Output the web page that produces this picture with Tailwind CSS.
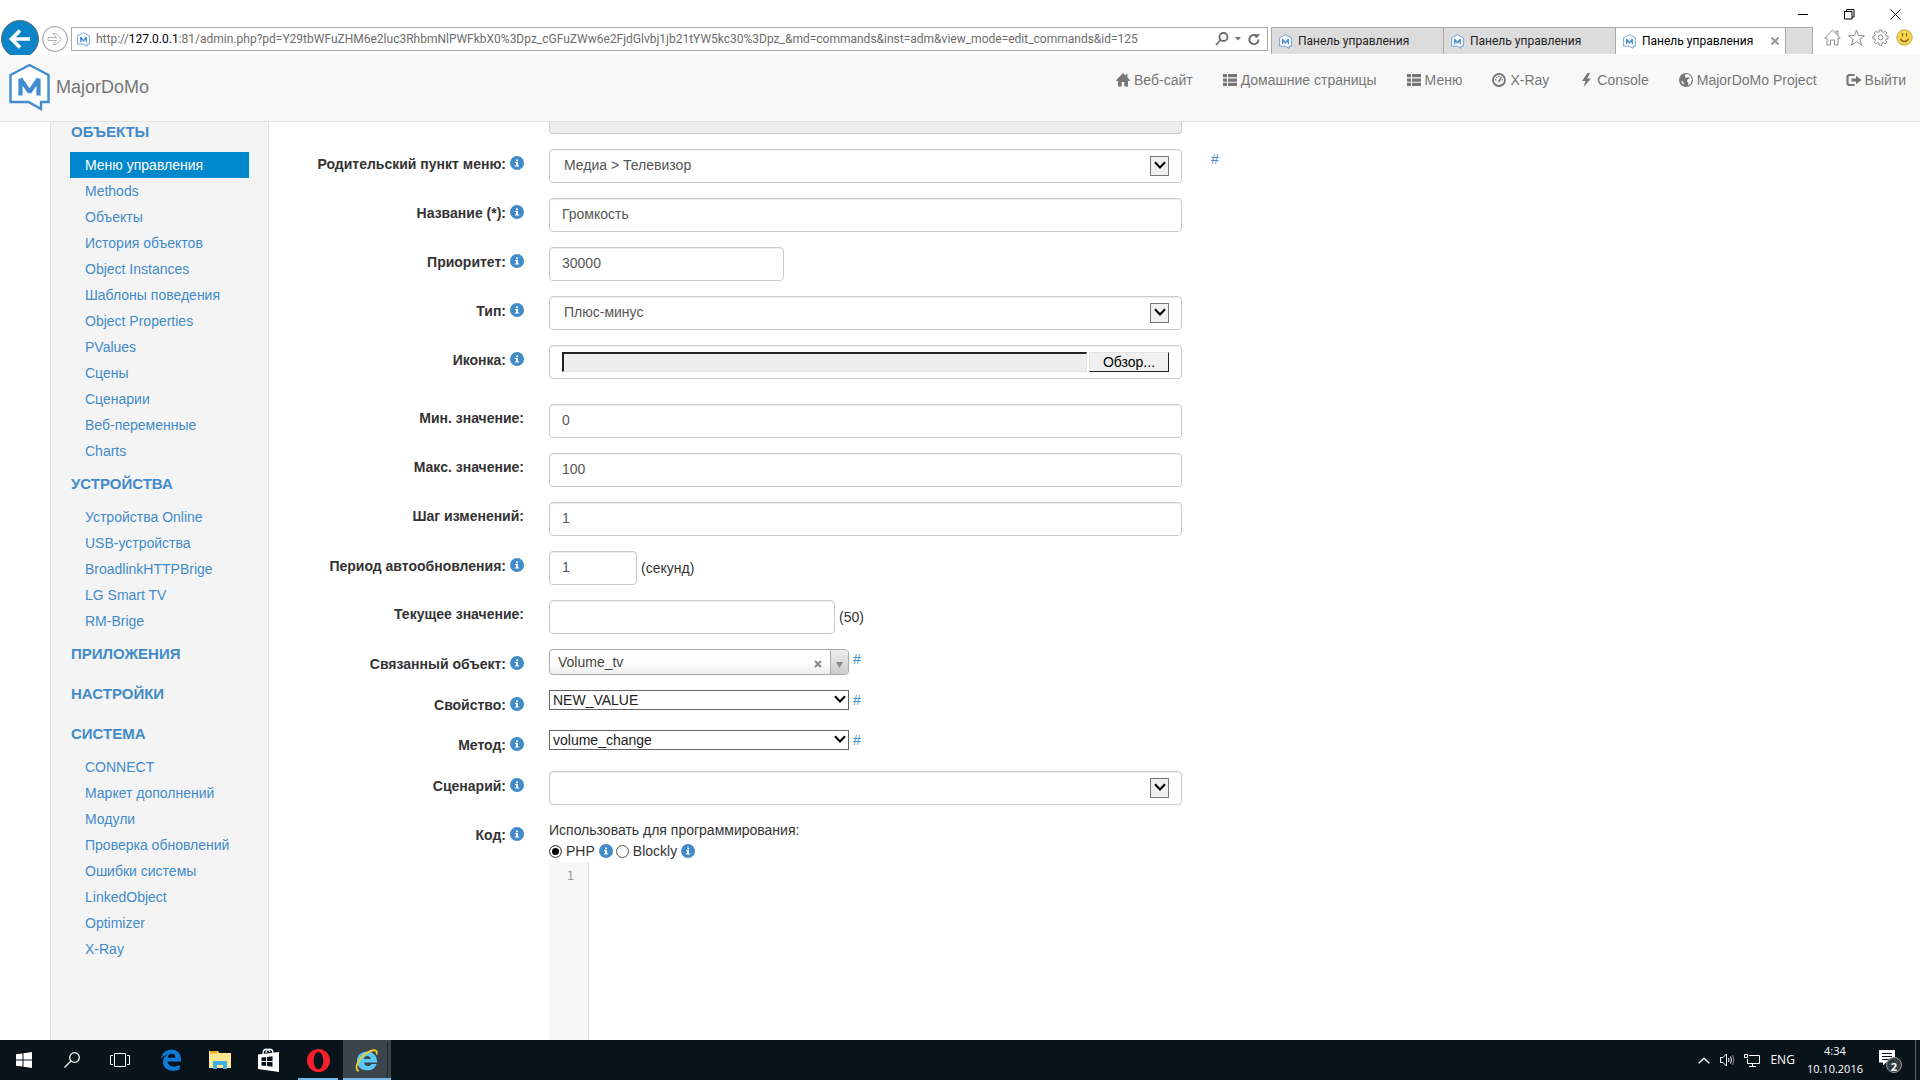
<!DOCTYPE html>
<html lang="ru">
<head>
<meta charset="utf-8">
<title>Панель управления</title>
<script src="https://cdn.jsdelivr.net/npm/@tailwindcss/browser@4"></script>
</head>
<body class="flex h-screen flex-col overflow-hidden bg-white font-['Liberation_Sans',Arial,sans-serif] text-sm leading-5 text-[#333]">

<svg class="hidden" aria-hidden="true">
  <symbol id="logo" viewBox="0 0 42 48"><path d="M2 12 21 2l19 10v27h-7.500v7L20 39H2z" fill="#fff" stroke="#428bd3" stroke-width="2.400"/><path d="M12 32.500V16l9 13 9-13v16.500" fill="none" stroke="#428bd3" stroke-width="4.200" stroke-linejoin="bevel"/></symbol>
  <symbol id="info" viewBox="0 0 14 14"><circle cx="7" cy="7" r="7" fill="#428bca"/><path d="M6 3.500h2v1.700H6zM5 6h3v3.500h1.200v1H4.800v-1H6V7H5z" fill="#fff"/></symbol>
  <symbol id="chev" viewBox="0 0 12 8"><path d="M1 1.200 6 6.500l5-5.300" fill="none" stroke="currentColor" stroke-width="2"/></symbol>
  <symbol id="list" viewBox="0 0 14 14"><path d="M0 1h4v3.300H0zM5 1h9v3.300H5zM0 5.400h4v3.300H0zM5 5.400h9v3.300H5zM0 9.800h4v3.300H0zM5 9.800h9v3.300H5z"/></symbol>
</svg>

<!-- Browser window bar -->
<header class="flex h-[55px] shrink-0 items-start overflow-hidden bg-white font-[Roboto,'Open_Sans',sans-serif]">
  <div class="flex min-w-0 flex-1 items-start pt-5">
    <button class="ml-px size-[38px] shrink-0" aria-label="Назад"><svg viewBox="0 0 38 38"><circle cx="19" cy="19" r="18.500" fill="#0a84c6" stroke="#5d6b75"/><path d="M29 19H11M19 10.500 10.500 19l8.500 8.500" fill="none" stroke="#fff" stroke-width="3.600"/></svg></button>
    <button class="mt-[6px] ml-[3px] size-[26px] shrink-0" aria-label="Вперёд"><svg viewBox="0 0 26 26" fill="none" stroke="#b0b0b0"><circle cx="13" cy="13" r="12.300" stroke-width="1.300"/><path d="M6 11.500h8.500l-3.500-4h3l5.500 5.500-5.500 5.500h-3l3.500-4H6z"/></svg></button>
    <div class="mt-[7px] ml-[3px] flex h-6 min-w-0 flex-1 items-center border border-[#a9a9a9] pr-[6px] pl-[5px]">
      <svg class="h-[15px] w-[13px] shrink-0"><use href="#logo"/></svg>
      <p class="ml-[6px] min-w-0 flex-1 truncate text-xs leading-5 text-[#6d6d6d]">http://<span class="text-black">127.0.0.1</span>:81/admin.php?pd=Y29tbWFuZHM6e2luc3RhbmNlPWFkbX0%3Dpz_cGFuZWw6e2FjdGlvbj1jb21tYW5kc30%3Dpz_&amp;md=commands&amp;inst=adm&amp;view_mode=edit_commands&amp;id=125</p>
      <button class="size-[14px] shrink-0" aria-label="Поиск"><svg viewBox="0 0 14 14" fill="none" stroke="#6d6d6d" stroke-width="1.800"><circle cx="8.500" cy="5" r="4"/><path d="M5.500 8 1 13"/></svg></button>
      <button class="mx-[6px] w-[6px] shrink-0" aria-label="Список адресов"><svg viewBox="0 0 6 4"><path d="M0 0h6L3 3.500z" fill="#6d6d6d"/></svg></button>
      <button class="size-[14px] shrink-0" aria-label="Обновить"><svg viewBox="0 0 14 14"><path d="M11.500 7.500A4.600 4.600 0 1 1 8.500 3.200" fill="none" stroke="#6d6d6d" stroke-width="1.900"/><path d="M7 0v5.500h5.500z" fill="#6d6d6d" transform="rotate(-45 9 3)"/></svg></button>
    </div>
  </div>
  <nav class="mt-[27px] ml-[3px] flex h-[27px] shrink-0 border-t border-r border-[#a9a9a9] text-xs text-[#222]">
    <a href="#" class="flex w-[172px] items-center gap-[6px] border-l border-[#a9a9a9] bg-[#dcdcdc] pl-[7px]"><svg class="h-[15px] w-[13px]"><use href="#logo"/></svg>Панель управления</a>
    <a href="#" class="flex w-[172px] items-center gap-[6px] border-l border-[#a9a9a9] bg-[#dcdcdc] pl-[7px]"><svg class="h-[15px] w-[13px]"><use href="#logo"/></svg>Панель управления</a>
    <a href="#" class="flex w-[170px] items-center gap-[6px] border-l border-[#a9a9a9] bg-white pr-[6px] pl-[7px] text-black"><svg class="h-[15px] w-[13px]"><use href="#logo"/></svg>Панель управления<svg class="ml-auto size-2" viewBox="0 0 8 8"><path d="m.5.5 7 7m0-7-7 7" stroke="#999" stroke-width="2"/></svg></a>
    <button class="w-[27px] border-l border-[#a9a9a9] bg-[#dcdcdc]" aria-label="Новая вкладка"></button>
  </nav>
  <div class="flex shrink-0 flex-col items-end pr-[7px] pl-[11px]">
    <div class="-ml-10 flex h-[29px] items-center gap-[35px] pr-[12px]">
      <button aria-label="Свернуть"><svg class="size-[11px]" viewBox="0 0 11 11"><path d="M0 5.500h10" stroke="#000"/></svg></button>
      <button aria-label="Восстановить"><svg class="size-[11px]" viewBox="0 0 11 11" fill="none" stroke="#000"><path d="M.5 2.500h7.500v7.500H.5zM2.500 2.500v-2H10v7.500H8"/></svg></button>
      <button aria-label="Закрыть"><svg class="size-[11px]" viewBox="0 0 11 11"><path d="m.5.5 10 10m0-10-10 10" stroke="#000"/></svg></button>
    </div>
    <div class="flex items-center gap-[7px]">
      <button aria-label="Домой"><svg class="size-[17px]" viewBox="0 0 17 17" fill="none" stroke="#8d8d8d"><path d="M.7 9 8.500 1 16.300 9l-1 1-1.300-1.300V16h-3.500v-5h-4v5H3V8.700L1.700 10zM12 4.500V2h2v4.500"/></svg></button>
      <button aria-label="Избранное"><svg class="size-[17px]" viewBox="0 0 17 17" fill="none" stroke="#8d8d8d"><path d="m8.500 1 2 5.500 6 .2-4.700 3.700 1.700 5.800-5-3.400-5 3.400 1.700-5.800L.5 6.700l6-.2z"/></svg></button>
      <button aria-label="Сервис"><svg class="size-[17px]" viewBox="0 0 17 17" fill="none" stroke="#8d8d8d"><circle cx="8.500" cy="8.500" r="2.400"/><path d="M7.200 1h2.600l.3 2 1.300.5 1.700-1.200 1.700 1.700-1.200 1.700.5 1.300 2 .3v2.600l-2 .3-.5 1.300 1.200 1.700-1.700 1.700-1.700-1.200-1.300.5-.3 2H7.200l-.3-2-1.300-.5-1.700 1.200-1.700-1.700 1.200-1.700-.5-1.300-2-.3V7.300l2-.3.500-1.300L2.200 4l1.700-1.700 1.700 1.200L6.900 3z"/></svg></button>
      <button aria-label="Отзыв"><svg class="size-[17px]" viewBox="0 0 17 17"><circle cx="8.500" cy="8.500" r="7.700" fill="#fcd647" stroke="#b9a55a"/><path d="M6.500 4v3.500M10.500 4v3.500M4.500 9.500c1 4 7 4 8 0" fill="none" stroke="#7b6a26" stroke-width="1.300"/></svg></button>
    </div>
  </div>
</header>

<!-- Site navigation -->
<div class="flex h-[67px] shrink-0 items-start justify-between border-b border-[#e3e3e3] bg-[#f8f8f8] pr-[14px] pl-2 text-[#777]">
  <a href="#" class="flex items-center gap-[5px] pt-2 text-lg leading-5"><svg class="h-12 w-[43px]"><use href="#logo"/></svg>MajorDoMo</a>
  <nav class="flex gap-[30px] pt-[15px]">
    <a href="#" class="flex items-center gap-1"><svg class="size-[14px]" viewBox="0 0 14 14" fill="currentColor"><path d="M7 0 0 7.200l.8.800H2v5.500h3.800V9h2.400v4.500H12V8h1.200l.8-.8-2.500-2.600V1H9.700v1.700z"/></svg>Веб-сайт</a>
    <a href="#" class="flex items-center gap-1"><svg class="size-[14px]" fill="currentColor"><use href="#list"/></svg>Домашние страницы</a>
    <a href="#" class="flex items-center gap-1"><svg class="size-[14px]" fill="currentColor"><use href="#list"/></svg>Меню</a>
    <a href="#" class="flex items-center gap-1"><svg class="size-[14px]" viewBox="0 0 14 14"><circle cx="7" cy="7" r="6" fill="none" stroke="currentColor" stroke-width="1.800"/><path d="M6.200 8 9 3.500 10 4 8 8.500 6.500 9.500zM3 6h1.500v1.200H3zM4 3.800h1.300V5H4zM6.300 2.800h1.200V4H6.300zM9.700 6H11v1.200H9.700z" fill="currentColor"/></svg>X-Ray</a>
    <a href="#" class="flex items-center gap-1"><svg class="size-[14px]" viewBox="0 0 14 14" fill="currentColor"><path d="M8.500 0 3 8h3.500L4.500 14 12 5.500H8.300L11 0z"/></svg>Console</a>
    <a href="#" class="flex items-center gap-1"><svg class="size-[14px]" viewBox="0 0 14 14"><circle cx="7" cy="7" r="7" fill="currentColor"/><path d="M6 1.500 9 1l3 2.500 1 3.500-1.500 4L9 12.500 9.500 10 8 8.500l.5-2L11 5 9 4 7.500 5 6 4zM2 7.500 4.500 9l.5 2.500-1.500-.5z" fill="#f8f8f8"/></svg>MajorDoMo Project</a>
    <a href="#" class="flex items-center gap-1"><svg class="size-[14px] overflow-visible" viewBox="1 0 14 14"><path d="M8.500 2H3.500Q1.500 2 1.500 4v6q0 2 2 2h5" fill="none" stroke="currentColor" stroke-width="2.200"/><path d="M5.500 5.500H10V2.800L15.500 7 10 11.200V8.500H5.500z" fill="currentColor"/></svg>Выйти</a>
  </nav>
</div>

<main class="flex min-h-0 flex-1 overflow-hidden pl-[50px]">
  <!-- Section menu -->
  <aside class="w-[219px] shrink-0 border-x border-[#e0e0e0] bg-[#f4f4f4] px-[19px] leading-[26px] text-[#428bca]">
    <h2 class="flex h-[30px] items-center pb-[10px] pl-px text-[15px] font-bold"><a href="#">ОБЪЕКТЫ</a></h2>
    <ul>
      <li><a href="#" class="block bg-[#0088cc] pl-[15px] text-white">Меню управления</a></li>
      <li><a href="#" class="block pl-[15px]">Methods</a></li>
      <li><a href="#" class="block pl-[15px]">Объекты</a></li>
      <li><a href="#" class="block pl-[15px]">История объектов</a></li>
      <li><a href="#" class="block pl-[15px]">Object Instances</a></li>
      <li><a href="#" class="block pl-[15px]">Шаблоны поведения</a></li>
      <li><a href="#" class="block pl-[15px]">Object Properties</a></li>
      <li><a href="#" class="block pl-[15px]">PValues</a></li>
      <li><a href="#" class="block pl-[15px]">Сцены</a></li>
      <li><a href="#" class="block pl-[15px]">Сценарии</a></li>
      <li><a href="#" class="block pl-[15px]">Веб-переменные</a></li>
      <li><a href="#" class="block pl-[15px]">Charts</a></li>
    </ul>
    <h2 class="flex h-10 items-center pl-px text-[15px] font-bold"><a href="#">УСТРОЙСТВА</a></h2>
    <ul>
      <li><a href="#" class="block pl-[15px]">Устройства Online</a></li>
      <li><a href="#" class="block pl-[15px]">USB-устройства</a></li>
      <li><a href="#" class="block pl-[15px]">BroadlinkHTTPBrige</a></li>
      <li><a href="#" class="block pl-[15px]">LG Smart TV</a></li>
      <li><a href="#" class="block pl-[15px]">RM-Brige</a></li>
    </ul>
    <h2 class="flex h-10 items-center pl-px text-[15px] font-bold"><a href="#">ПРИЛОЖЕНИЯ</a></h2>
    <h2 class="flex h-10 items-center pl-px text-[15px] font-bold"><a href="#">НАСТРОЙКИ</a></h2>
    <h2 class="flex h-10 items-center pl-px text-[15px] font-bold"><a href="#">СИСТЕМА</a></h2>
    <ul>
      <li><a href="#" class="block pl-[15px]">CONNECT</a></li>
      <li><a href="#" class="block pl-[15px]">Маркет дополнений</a></li>
      <li><a href="#" class="block pl-[15px]">Модули</a></li>
      <li><a href="#" class="block pl-[15px]">Проверка обновлений</a></li>
      <li><a href="#" class="block pl-[15px]">Ошибки системы</a></li>
      <li><a href="#" class="block pl-[15px]">LinkedObject</a></li>
      <li><a href="#" class="block pl-[15px]">Optimizer</a></li>
      <li><a href="#" class="block pl-[15px]">X-Ray</a></li>
    </ul>
  </aside>

  <!-- Menu item form -->
  <form class="grid min-w-0 flex-1 grid-cols-[255px_minmax(0,633fr)_minmax(0,713fr)] content-start gap-x-[25px] gap-y-[15px]">
    <div class="col-start-2 h-3 rounded-b border border-t-0 border-[#ccc] bg-[#eee]"></div>

    <label for="parent" class="col-start-1 flex items-start justify-end gap-1 pt-[5px] font-bold">Родительский пункт меню:<svg class="mt-[2px] size-[14px]"><use href="#info"/></svg></label>
    <div class="relative h-[34px]">
      <select id="parent" class="size-full appearance-none rounded border border-[#ccc] bg-white pr-10 pb-[2px] pl-[14px] text-[#555] shadow-[inset_0_1px_1px_rgba(0,0,0,0.075)]"><option>Медиа &gt; Телевизор</option></select>
      <span class="pointer-events-none absolute top-[7px] right-[13px] flex h-5 w-[19px] items-center justify-center border border-[#777] bg-[#f0f0f0] pb-[2px] text-black"><svg class="h-2 w-3"><use href="#chev"/></svg></span>
    </div>
    <a href="#" class="justify-self-start pl-1 text-[#428bca]">#</a>

    <label for="title" class="col-start-1 flex items-start justify-end gap-1 pt-[5px] font-bold">Название (*):<svg class="mt-[2px] size-[14px]"><use href="#info"/></svg></label>
    <input id="title" value="Громкость" class="h-[34px] rounded border border-[#ccc] px-3 pb-[2px] text-[#555] shadow-[inset_0_1px_1px_rgba(0,0,0,0.075)]">

    <label for="priority" class="col-start-1 flex items-start justify-end gap-1 pt-[5px] font-bold">Приоритет:<svg class="mt-[2px] size-[14px]"><use href="#info"/></svg></label>
    <input id="priority" value="30000" class="h-[34px] w-[235px] rounded border border-[#ccc] px-3 pb-[2px] text-[#555] shadow-[inset_0_1px_1px_rgba(0,0,0,0.075)]">

    <label for="type" class="col-start-1 flex items-start justify-end gap-1 pt-[5px] font-bold">Тип:<svg class="mt-[2px] size-[14px]"><use href="#info"/></svg></label>
    <div class="relative h-[34px]">
      <select id="type" class="size-full appearance-none rounded border border-[#ccc] bg-white pr-10 pb-[2px] pl-[14px] text-[#555] shadow-[inset_0_1px_1px_rgba(0,0,0,0.075)]"><option>Плюс-минус</option></select>
      <span class="pointer-events-none absolute top-[7px] right-[13px] flex h-5 w-[19px] items-center justify-center border border-[#777] bg-[#f0f0f0] pb-[2px] text-black"><svg class="h-2 w-3"><use href="#chev"/></svg></span>
    </div>

    <label for="icon" class="col-start-1 flex items-start justify-end gap-1 pt-[5px] font-bold">Иконка:<svg class="mt-[2px] size-[14px]"><use href="#info"/></svg></label>
    <div class="mb-[10px] flex h-[34px] items-center gap-[2px] rounded border border-[#ccc] px-3 shadow-[inset_0_1px_1px_rgba(0,0,0,0.075)]">
      <input id="icon" readonly class="h-5 min-w-0 flex-1 border-t-2 border-r border-b border-l-2 border-t-[#222] border-r-[#e3e3e3] border-b-[#e3e3e3] border-l-[#222] bg-[#eee]">
      <button type="button" class="h-5 w-20 border border-t-[#e3e3e3] border-r-[#222] border-b-[#222] border-l-[#e3e3e3] bg-[#f0f0f0] leading-[18px] text-black">Обзор...</button>
    </div>

    <label for="min" class="col-start-1 flex items-start justify-end pt-1 font-bold">Мин. значение:</label>
    <input id="min" value="0" class="h-[34px] rounded border border-[#ccc] px-3 pb-[2px] text-[#555] shadow-[inset_0_1px_1px_rgba(0,0,0,0.075)]">

    <label for="max" class="col-start-1 flex items-start justify-end pt-1 font-bold">Макс. значение:</label>
    <input id="max" value="100" class="h-[34px] rounded border border-[#ccc] px-3 pb-[2px] text-[#555] shadow-[inset_0_1px_1px_rgba(0,0,0,0.075)]">

    <label for="step" class="col-start-1 flex items-start justify-end pt-1 font-bold">Шаг изменений:</label>
    <input id="step" value="1" class="h-[34px] rounded border border-[#ccc] px-3 pb-[2px] text-[#555] shadow-[inset_0_1px_1px_rgba(0,0,0,0.075)]">

    <label for="period" class="col-start-1 flex items-start justify-end gap-1 pt-[5px] font-bold">Период автообновления:<svg class="mt-[2px] size-[14px]"><use href="#info"/></svg></label>
    <div class="flex items-center gap-1"><input id="period" value="1" class="h-[34px] w-[88px] rounded border border-[#ccc] px-3 pb-[2px] text-[#555] shadow-[inset_0_1px_1px_rgba(0,0,0,0.075)]">(секунд)</div>

    <label for="current" class="col-start-1 flex items-start justify-end pt-1 font-bold">Текущее значение:</label>
    <div class="flex items-center gap-1"><input id="current" class="h-[34px] w-[286px] rounded border border-[#ccc] px-3 text-[#555] shadow-[inset_0_1px_1px_rgba(0,0,0,0.075)]">(50)</div>

    <label for="object" class="col-start-1 flex items-start justify-end gap-1 pt-[5px] font-bold">Связанный объект:<svg class="mt-[2px] size-[14px]"><use href="#info"/></svg></label>
    <div class="flex items-start gap-1">
      <div class="relative h-[26px] w-[300px]">
        <select id="object" class="size-full appearance-none rounded border border-[#aaa] bg-linear-to-b from-white from-50% to-[#eee] pr-12 pl-2 text-[#444]"><option>Volume_tv</option></select>
        <span class="pointer-events-none absolute inset-y-px right-px flex items-center">
          <svg class="mt-1 mr-2 size-2" viewBox="0 0 8 8"><path d="m1 1 6 6m0-6-6 6" stroke="#888" stroke-width="2"/></svg>
          <span class="flex h-full w-[18px] items-center justify-center rounded-r-[3px] border-l border-[#aaa] bg-linear-to-b from-[#eee] to-[#ccc]"><svg class="mt-[5px] h-[6px] w-[7px]" viewBox="0 0 7 6"><path d="M0 0h7L3.500 6z" fill="#888"/></svg></span>
        </span>
      </div>
      <a href="#" class="text-[#428bca]">#</a>
    </div>

    <label for="property" class="col-start-1 flex items-start justify-end gap-1 pt-[5px] font-bold">Свойство:<svg class="mt-[2px] size-[14px]"><use href="#info"/></svg></label>
    <div class="flex items-start gap-1">
      <div class="relative h-5 w-[300px]">
        <select id="property" class="size-full appearance-none border border-[#666] bg-white pl-[3px] text-sm leading-4 text-[#222]"><option>NEW_VALUE</option></select>
        <svg class="pointer-events-none absolute top-[5px] right-[3px] h-2 w-3 text-black"><use href="#chev"/></svg>
      </div>
      <a href="#" class="text-[#428bca]">#</a>
    </div>

    <label for="method" class="col-start-1 flex items-start justify-end gap-1 pt-[5px] font-bold">Метод:<svg class="mt-[2px] size-[14px]"><use href="#info"/></svg></label>
    <div class="flex h-[26px] items-start gap-1">
      <div class="relative h-5 w-[300px]">
        <select id="method" class="size-full appearance-none border border-[#666] bg-white pl-[3px] text-sm leading-4 text-[#222]"><option>volume_change</option></select>
        <svg class="pointer-events-none absolute top-[5px] right-[3px] h-2 w-3 text-black"><use href="#chev"/></svg>
      </div>
      <a href="#" class="text-[#428bca]">#</a>
    </div>

    <label for="script" class="col-start-1 flex items-start justify-end gap-1 pt-[5px] font-bold">Сценарий:<svg class="mt-[2px] size-[14px]"><use href="#info"/></svg></label>
    <div class="relative h-[34px]">
      <select id="script" class="size-full appearance-none rounded border border-[#ccc] bg-white pr-10 pl-[14px] text-[#555] shadow-[inset_0_1px_1px_rgba(0,0,0,0.075)]"><option></option></select>
      <span class="pointer-events-none absolute top-[7px] right-[13px] flex h-5 w-[19px] items-center justify-center border border-[#777] bg-[#f0f0f0] pb-[2px] text-black"><svg class="h-2 w-3"><use href="#chev"/></svg></span>
    </div>

    <label for="code" class="col-start-1 flex items-start justify-end gap-1 pt-[5px] font-bold">Код:<svg class="mt-[2px] size-[14px]"><use href="#info"/></svg></label>
    <div>
      <p>Использовать для программирования:</p>
      <div class="flex h-[22px] items-center">
        <input type="radio" id="php" name="lang" checked class="mr-1 size-[13px] appearance-none rounded-full border border-[#555] shadow-[inset_0_0_0_2px_white] checked:bg-black">
        <label for="php">PHP</label><svg class="mr-[3px] ml-1 size-[14px]"><use href="#info"/></svg>
        <input type="radio" id="blockly" name="lang" class="mr-1 size-[13px] appearance-none rounded-full border border-[#555] shadow-[inset_0_0_0_2px_white] checked:bg-black">
        <label for="blockly">Blockly</label><svg class="mx-1 size-[14px]"><use href="#info"/></svg>
      </div>
      <div class="flex h-[300px] font-['DejaVu_Sans_Mono',monospace] text-xs">
        <div class="w-10 border-r border-[#ddd] bg-[#f7f7f7] pt-[6px] pr-[14px] text-right leading-4 text-[#999]">1</div>
        <textarea id="code" class="flex-1 resize-none p-1 outline-none"></textarea>
      </div>
    </div>
  </form>
</main>

<!-- Taskbar -->
<footer class="flex h-10 shrink-0 items-center justify-between bg-[#08131a] font-['Open_Sans','Noto_Sans',sans-serif] text-[11px] leading-[18px] text-white">
  <div class="flex h-full">
    <button class="grid w-12 place-items-center" aria-label="Пуск"><svg class="size-4" viewBox="0 0 16 16" fill="#fff"><path d="M0 2.300 6.500 1.400V7.500H0zM7.500 1.200 16 0v7.500H7.500zM0 8.500h6.500v6.100L0 13.700zM7.500 8.500H16V16l-8.500-1.200z"/></svg></button>
    <button class="grid w-12 place-items-center" aria-label="Поиск"><svg class="size-4" viewBox="0 0 16 16" fill="none" stroke="#fff" stroke-width="1.300"><circle cx="10.500" cy="5.500" r="4.800"/><path d="M7 9 .5 15.500"/></svg></button>
    <button class="grid w-12 place-items-center" aria-label="Представление задач"><svg class="h-4 w-5" viewBox="0 0 20 16" fill="none" stroke="#fff"><path d="M4.500 1.500h11v13h-11zM3 3.500H.5v9H3M17 3.500h2.500v9H17"/></svg></button>
    <button class="ml-[3px] grid w-12 place-items-center" aria-label="Edge"><svg class="size-[22px]" viewBox="0 0 22 22"><path d="M1 10C2 4 6 .5 11.500.5 17.500.5 21 5 21 10v2.500H7.500C8 16 11 17.500 14 17.500c2.300 0 4.200-.6 5.800-1.500v4.200c-2 1-4.200 1.500-6.800 1.500-6 0-10-3.400-10-8.700 0-3.300 1.800-6 5-7.500C4.800 6 2.500 7.500 1 10zM7.500 8.700h7.800c0-2.500-1.300-4-3.700-4-2.200 0-3.600 1.500-4.100 4z" fill="#0f7bd8" fill-rule="evenodd"/></svg></button>
    <button class="grid w-[49px] place-items-center" aria-label="Проводник"><svg class="h-[18px] w-[22px]" viewBox="0 0 22 18"><path d="M0 0h9l1 2h12v15H0z" fill="#ffe694"/><path d="M1 0h7v2.500H1z" fill="#eab41c"/><path d="M4 10h14v8h-4v-4H8v4H4z" fill="#3eb1e2"/></svg></button>
    <button class="grid w-[49px] place-items-center" aria-label="Магазин"><svg class="h-6 w-[21px]" viewBox="0 0 21 24"><path d="M5 6c0-6 5-6 7-2M8 5c0-5 7-5 7 0" fill="none" stroke="#fff" stroke-width="1.300"/><path d="M0 6.500 21 4v20L0 21z" fill="#fff"/><path d="M3.500 9.500 8 9v4H3.500zM9 8.900l5.500-.6V13H9zM3.500 14H8v4l-4.500-.5zM9 14h5.500v4.700L9 18z" fill="#08131a"/></svg></button>
    <button class="ml-[5px] grid w-10 place-items-center border-b-2 border-[#76b9ed] pt-[2px]" aria-label="Opera"><svg class="size-[23px]" viewBox="0 0 24 24"><path d="M12 0a12 12 0 1 0 0 24 12 12 0 0 0 0-24zm0 3c3 0 5 4 5 9s-2 9-5 9-5-4-5-9 2-9 5-9z" fill="#f5202d" fill-rule="evenodd"/></svg></button>
    <button class="ml-[5px] flex w-12 items-center border-b-2 border-[#76b9ed] bg-[#3b454b] pt-[2px]" aria-label="Internet Explorer"><svg class="ml-3 size-[23px]" viewBox="0 0 23 23"><path d="M2 12C2 6 6.500 2.500 12 2.500S22 6.500 22 12v1.500H9c.3 2.500 2 3.500 4 3.500 1.600 0 2.800-.6 3.500-2h5c-1.200 4-4.500 6.300-9 6.300C6.500 21.300 2 18 2 12zm7-2h6.700c-.3-2-1.500-3-3.300-3S9.300 8 9 10z" fill="#5cc9f5" fill-rule="evenodd"/><path d="M4 22C-2 20 4 9 11 4.500S23 0 21.500 5.500" fill="none" stroke="#f6cf2b" stroke-width="1.800"/></svg><span class="ml-auto h-full w-1 border-l border-[#1d272d]"></span></button>
  </div>
  <div class="flex h-full items-center">
    <button aria-label="Скрытые значки"><svg class="h-[7px] w-3" viewBox="0 0 12 7"><path d="m.7 6.300 5.300-5 5.300 5" fill="none" stroke="#fff" stroke-width="1.500"/></svg></button>
    <button class="ml-[10px]" aria-label="Громкость"><svg class="size-4" viewBox="0 0 16 16" fill="none" stroke="#fff"><path d="M.5 5.500H3l3.500-3.500v12L3 10.500H.5zM8.500 6q1 2 0 4M10.500 4.500q2 3.500 0 7"/><path d="M12.500 3q3 5 0 10" stroke="#888"/></svg></button>
    <button class="ml-2" aria-label="Сеть"><svg class="size-4" viewBox="0 0 16 16" fill="none" stroke="#fff"><path d="M5 3.500h10.500v8H3.500V7M8.500 11.500v3M5 14.500h7M.5 2.500h3v3h-3z"/></svg></button>
    <button class="ml-[10px] text-xs">ENG</button>
    <div class="ml-3 text-center"><p>4:34</p><p>10.10.2016</p></div>
    <button class="relative mr-5 ml-4 pb-1" aria-label="Центр уведомлений"><svg class="size-4" viewBox="0 0 16 16"><path d="M0 0h16v12.500H7L4 15.500v-3H0z" fill="#fff"/><path d="M3 3.500h10M3 6.500h10M3 9.500h7" stroke="#08131a"/></svg><span class="absolute -right-[7px] -bottom-[3px] grid size-4 place-items-center rounded-full border border-[#999] bg-[#333d43] text-[11px] font-bold">2</span></button>
    <span class="mr-1 h-full w-px bg-[#57616a]"></span>
  </div>
</footer>
</body>
</html>
